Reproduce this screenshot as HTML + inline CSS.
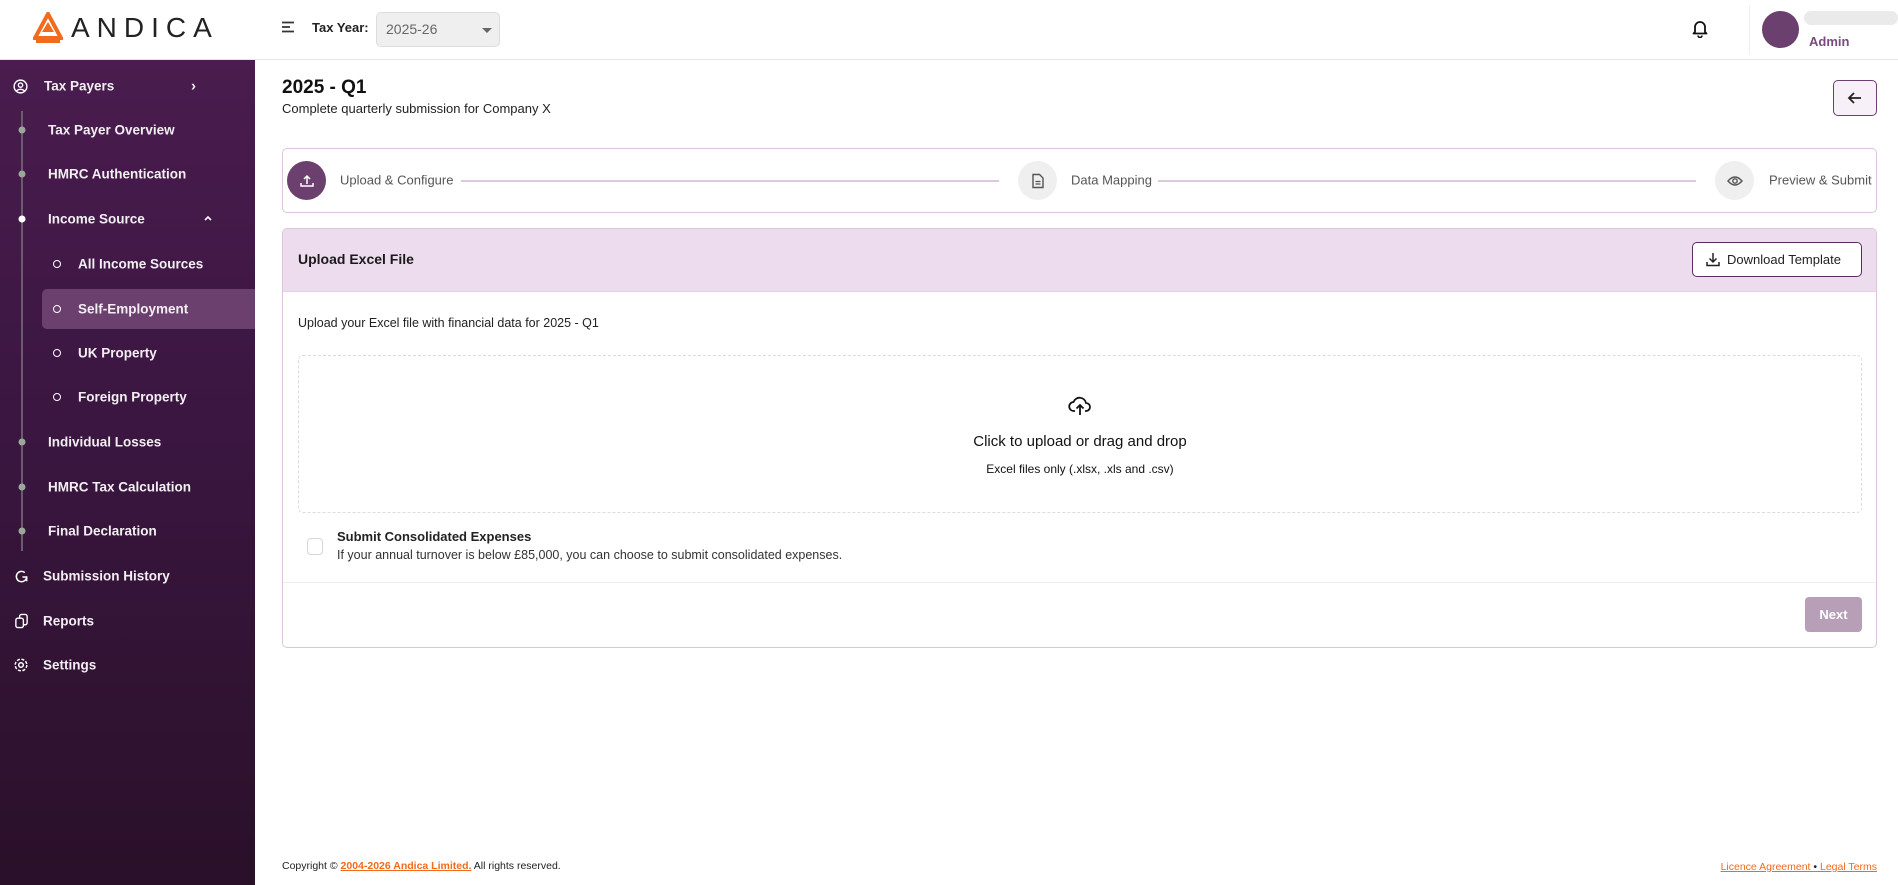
<!DOCTYPE html>
<html><head><meta charset="utf-8"><style>
*{box-sizing:border-box;margin:0;padding:0}
body{width:1898px;height:885px;position:relative;overflow:hidden;font-family:"Liberation Sans",sans-serif;background:#fff;color:#1a1a1a}
.a{position:absolute}
.side{left:0;top:60px;width:255px;height:825px;background:linear-gradient(180deg,#4a1c4f 0%,#3a1640 45%,#2a1029 100%)}
.side .t{position:absolute;color:#f2eef2;font-size:13.5px;font-weight:bold;white-space:nowrap;transform:translateY(-50%)}
.dot{position:absolute;width:7px;height:7px;border-radius:50%;background:#9aa89a;transform:translate(-50%,-50%)}
.ring{position:absolute;width:8px;height:8px;border-radius:50%;border:1.6px solid #fff;transform:translate(-50%,-50%)}
.hdr{left:0;top:0;width:1898px;height:60px;border-bottom:1px solid #e6e6e6;background:#fff}
.card{border:1.5px solid #dcc6de;border-radius:5px;background:#fff}
.circ{position:absolute;width:39px;height:39px;border-radius:50%;top:161px;display:flex;align-items:center;justify-content:center}
.st{position:absolute;top:180px;transform:translateY(-50%);font-size:13px;color:#555}
.ln{position:absolute;top:180px;height:1.5px;background:#ddc9df}
</style></head><body>
<div class="a hdr">
  <svg class="a" style="left:33px;top:12px" width="30" height="32" viewBox="0 0 30 32"><path d="M15 2 L28 26 L2 26 Z" fill="none" stroke="#f26a1b" stroke-width="4" stroke-linejoin="miter"/><path d="M9 20 H21 L15 10 Z" fill="#f26a1b"/><rect x="3" y="28" width="24" height="3" fill="#f26a1b"/></svg>
  <div class="a" style="left:71px;top:12px;font-size:28px;letter-spacing:7px;color:#222;font-weight:normal">ANDICA</div>
  <svg class="a" style="left:281px;top:21px" width="14" height="12" viewBox="0 0 14 12"><path d="M1 1.5H13M1 6H9M1 10.5H13" stroke="#333" stroke-width="1.8"/></svg>
  <div class="a" style="left:312px;top:20px;font-size:13px;font-weight:bold;color:#222">Tax Year:</div>
  <div class="a" style="left:376px;top:12px;width:124px;height:35px;background:#efefef;border:1px solid #ddd;border-radius:5px"></div>
  <div class="a" style="left:386px;top:21px;font-size:14px;color:#666">2025-26</div>
  <div class="a" style="left:482px;top:28px;width:0;height:0;border-left:5px solid transparent;border-right:5px solid transparent;border-top:5px solid #666"></div>
  <svg class="a" style="left:1692px;top:19px" width="16" height="19" viewBox="0 0 16 19"><path d="M3 13 V8 a5 5 0 0 1 10 0 V13 L14.5 14.5 H1.5 Z" fill="none" stroke="#111" stroke-width="1.8" stroke-linejoin="round"/><path d="M6 16.5 a2 2 0 0 0 4 0" fill="none" stroke="#111" stroke-width="1.6"/></svg>
  <div class="a" style="left:1749px;top:5px;width:1px;height:50px;background:#eee"></div>
  <div class="a" style="left:1762px;top:11px;width:37px;height:37px;border-radius:50%;background:#6b3f6e"></div>
  <div class="a" style="left:1804px;top:11px;width:94px;height:14px;border-radius:7px;background:#eaeaea"></div>
  <div class="a" style="left:1809px;top:34px;font-size:13px;font-weight:bold;color:#7a4a7e">Admin</div>
</div>
<div class="a side">
  <div class="a" style="left:21px;top:51px;width:1.5px;height:440px;background:#6e5a70"></div>
  <div class="a" style="left:42px;top:229px;width:213px;height:40px;border-radius:5px 0 0 5px;background:#6b3f6e"></div>
  <svg class="a" style="left:13px;top:19px" width="15" height="15" viewBox="0 0 16 16"><circle cx="8" cy="8" r="6.8" fill="none" stroke="#fff" stroke-width="1.5"/><circle cx="8" cy="6.5" r="2.3" fill="none" stroke="#fff" stroke-width="1.5"/><path d="M3.8 12.8 a5 4 0 0 1 8.4 0" fill="none" stroke="#fff" stroke-width="1.5"/></svg>
  <div class="t" style="left:44px;top:26px">Tax Payers</div>
  <div class="t" style="left:191px;top:26px;font-size:15px">›</div>
  <div class="dot" style="left:22px;top:70px"></div><div class="t" style="left:48px;top:70px">Tax Payer Overview</div>
  <div class="dot" style="left:22px;top:114px"></div><div class="t" style="left:48px;top:114px">HMRC Authentication</div>
  <div class="dot" style="left:22px;top:159px;background:#fff"></div><div class="t" style="left:48px;top:159px">Income Source</div>
  <svg class="a" style="left:203px;top:154px" width="10" height="8" viewBox="0 0 10 8"><path d="M2 6 L5 3 L8 6" fill="none" stroke="#fff" stroke-width="1.6"/></svg>
  <div class="ring" style="left:57px;top:204px"></div><div class="t" style="left:78px;top:204px">All Income Sources</div>
  <div class="ring" style="left:57px;top:249px"></div><div class="t" style="left:78px;top:249px">Self-Employment</div>
  <div class="ring" style="left:57px;top:293px"></div><div class="t" style="left:78px;top:293px">UK Property</div>
  <div class="ring" style="left:57px;top:337px"></div><div class="t" style="left:78px;top:337px">Foreign Property</div>
  <div class="dot" style="left:22px;top:382px"></div><div class="t" style="left:48px;top:382px">Individual Losses</div>
  <div class="dot" style="left:22px;top:427px"></div><div class="t" style="left:48px;top:427px">HMRC Tax Calculation</div>
  <div class="dot" style="left:22px;top:471px"></div><div class="t" style="left:48px;top:471px">Final Declaration</div>
  <svg class="a" style="left:14px;top:509px" width="15" height="15" viewBox="0 0 16 16"><path d="M13.5 8 A5.5 5.5 0 1 1 11.5 3.8" fill="none" stroke="#fff" stroke-width="1.6"/><path d="M9 8.5 H13.5 V13" fill="none" stroke="#fff" stroke-width="1.6"/></svg>
  <div class="t" style="left:43px;top:516px">Submission History</div>
  <svg class="a" style="left:14px;top:553px" width="15" height="16" viewBox="0 0 16 16"><rect x="2" y="5" width="8" height="10" rx="2" fill="none" stroke="#fff" stroke-width="1.5"/><path d="M6 5 V3 a2 2 0 0 1 2-2 h4 a2 2 0 0 1 2 2 v7 a2 2 0 0 1 -2 2 h-2" fill="none" stroke="#fff" stroke-width="1.5"/></svg>
  <div class="t" style="left:43px;top:561px">Reports</div>
  <svg class="a" style="left:13px;top:597px" width="16" height="16" viewBox="0 0 16 16"><circle cx="8" cy="8" r="2.3" fill="none" stroke="#fff" stroke-width="1.5"/><circle cx="8" cy="8" r="5.8" fill="none" stroke="#fff" stroke-width="1.5" stroke-dasharray="3 1.6"/></svg>
  <div class="t" style="left:43px;top:605px">Settings</div>
</div>

<div class="a" style="left:282px;top:77px;font-size:19px;font-weight:bold;color:#111">2025 - Q1</div>
<div class="a" style="left:282px;top:101px;font-size:13px;color:#222">Complete quarterly submission for Company X</div>
<div class="a" style="left:1833px;top:80px;width:44px;height:36px;border:1.5px solid #6b3f6e;border-radius:5px;background:#f8f0f8"></div>
<svg class="a" style="left:1847px;top:91px" width="16" height="14" viewBox="0 0 16 14"><path d="M14 7 H2 M7 2 L2 7 L7 12" fill="none" stroke="#222" stroke-width="1.8"/></svg>

<div class="a card" style="left:282px;top:148px;width:1595px;height:65px"></div>
<div class="circ" style="left:287px;background:#6b3f6e"><svg width="16" height="16" viewBox="0 0 16 16"><path d="M8 11 V3 M5 6 L8 3 L11 6 M2 10 v3 h12 v-3" fill="none" stroke="#fff" stroke-width="1.5"/></svg></div>
<div class="st" style="left:340px">Upload &amp; Configure</div>
<div class="ln" style="left:461px;width:538px"></div>
<div class="circ" style="left:1018px;background:#efefef"><svg width="14" height="16" viewBox="0 0 14 16"><path d="M2 1.5 h6.5 l3.5 3.5 v9.5 h-10 Z" fill="none" stroke="#555" stroke-width="1.4"/><path d="M4.5 8.5 h5 M4.5 11 h5" stroke="#555" stroke-width="1.2"/></svg></div>
<div class="st" style="left:1071px">Data Mapping</div>
<div class="ln" style="left:1158px;width:538px"></div>
<div class="circ" style="left:1715px;background:#efefef"><svg width="16" height="12" viewBox="0 0 16 12"><path d="M1 6 Q8 -2 15 6 Q8 14 1 6Z" fill="none" stroke="#555" stroke-width="1.4"/><circle cx="8" cy="6" r="2.2" fill="none" stroke="#555" stroke-width="1.4"/></svg></div>
<div class="st" style="left:1769px">Preview &amp; Submit</div>

<div class="a card" style="left:282px;top:228px;width:1595px;height:420px;overflow:hidden">
  <div class="a" style="left:0;top:0;width:100%;height:63px;background:#ecdcee;border-bottom:1px solid #e2d2e4"></div>
</div>
<div class="a" style="left:298px;top:251px;font-size:14px;font-weight:bold;color:#1a1a1a">Upload Excel File</div>
<div class="a" style="left:1692px;top:242px;width:170px;height:35px;border:1.5px solid #5a2d5e;border-radius:5px;background:#fff"></div>
<svg class="a" style="left:1706px;top:252px" width="14" height="15" viewBox="0 0 14 15"><path d="M7 1 V10 M3.5 6.5 L7 10 L10.5 6.5 M1 10 v3.5 h12 V10" fill="none" stroke="#222" stroke-width="1.5"/></svg>
<div class="a" style="left:1727px;top:252px;font-size:13px;color:#222">Download Template</div>
<div class="a" style="left:298px;top:316px;font-size:12.5px;color:#222">Upload your Excel file with financial data for 2025 - Q1</div>
<div class="a" style="left:298px;top:355px;width:1564px;height:158px;border:1.5px dashed #dcdcdc;border-radius:5px"></div>
<svg class="a" style="left:1068px;top:395px" width="24" height="22" viewBox="0 0 24 22"><path d="M7 16 H6 a4.5 4.5 0 0 1 -0.5 -9 a6.5 6.5 0 0 1 12.5 1 a4 4 0 0 1 0 8 h-1" fill="none" stroke="#111" stroke-width="1.8"/><path d="M12 20 V10 M8.5 13.5 L12 10 L15.5 13.5" fill="none" stroke="#111" stroke-width="1.8"/></svg>
<div class="a" style="left:880px;top:433px;width:400px;text-align:center;font-size:15px;color:#111">Click to upload or drag and drop</div>
<div class="a" style="left:880px;top:462px;width:400px;text-align:center;font-size:12px;color:#111">Excel files only (.xlsx, .xls and .csv)</div>
<div class="a" style="left:307px;top:538px;width:16px;height:17px;border:1.5px solid #d6d6d6;border-radius:4px"></div>
<div class="a" style="left:337px;top:529px;font-size:13px;font-weight:bold;color:#222">Submit Consolidated Expenses</div>
<div class="a" style="left:337px;top:548px;font-size:12.5px;color:#333">If your annual turnover is below £85,000, you can choose to submit consolidated expenses.</div>
<div class="a" style="left:283px;top:582px;width:1593px;height:1px;background:#eee"></div>
<div class="a" style="left:1805px;top:597px;width:57px;height:35px;border-radius:4px;background:#b89fb8;color:#fff;font-size:13px;font-weight:bold;text-align:center;line-height:35px">Next</div>

<div class="a" style="left:282px;top:860px;font-size:10.5px;color:#222">Copyright © <span style="color:#f26a1b;font-weight:bold;text-decoration:underline">2004-2026 Andica Limited.</span> All rights reserved.</div>
<div class="a" style="right:21px;top:861px;font-size:10.5px;color:#f26a1b;text-decoration:underline">Licence Agreement <span style="color:#222;text-decoration:none">•</span> Legal Terms</div>
</body></html>
